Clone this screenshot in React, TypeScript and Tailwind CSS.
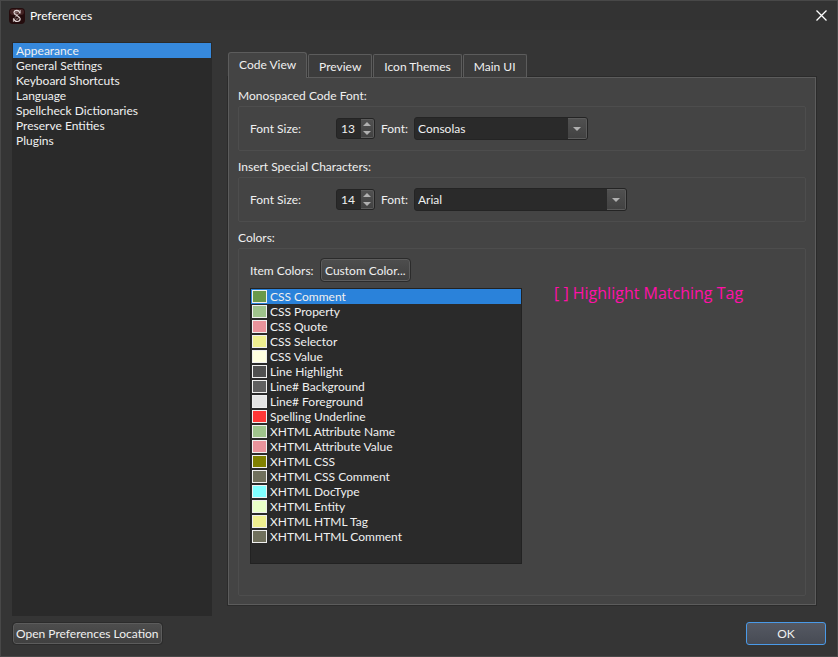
import { useState } from "react";

const sections = [
    "Appearance",
    "General Settings",
    "Keyboard Shortcuts",
    "Language",
    "Spellcheck Dictionaries",
    "Preserve Entities",
    "Plugins",
];

const tabs = ["Code View", "Preview", "Icon Themes", "Main UI"];

const itemColors = [
    { name: "CSS Comment", swatch: "bg-[#6a994a]" },
    { name: "CSS Property", swatch: "bg-[#9fc38c]" },
    { name: "CSS Quote", swatch: "bg-[#e9939b]" },
    { name: "CSS Selector", swatch: "bg-[#efef8f]" },
    { name: "CSS Value", swatch: "bg-[#ffffe0]" },
    { name: "Line Highlight", swatch: "bg-[#505050]" },
    { name: "Line# Background", swatch: "bg-[#606060]" },
    { name: "Line# Foreground", swatch: "bg-[#e4e4e4]" },
    { name: "Spelling Underline", swatch: "bg-[#ff3737]" },
    { name: "XHTML Attribute Name", swatch: "bg-[#9fc38c]" },
    { name: "XHTML Attribute Value", swatch: "bg-[#e9939b]" },
    { name: "XHTML CSS", swatch: "bg-[#808000]" },
    { name: "XHTML CSS Comment", swatch: "bg-[#70705c]" },
    { name: "XHTML DocType", swatch: "bg-[#80ffff]" },
    { name: "XHTML Entity", swatch: "bg-[#e8ffc8]" },
    { name: "XHTML HTML Tag", swatch: "bg-[#efef8f]" },
    { name: "XHTML HTML Comment", swatch: "bg-[#70705c]" },
];

function AppIcon() {
    return (
        <svg width="16" height="16" viewBox="0 0 16 16" fill="none" aria-hidden="true">
            <rect width="16" height="16" rx="4" fill="#240c0d" />
            <rect x="1" y="1" width="14" height="6" rx="3" fill="#432324" />
            <path d="M10.8 5.4C10.4 3.2 9.4 2.4 7.8 2.4 6 2.4 5 3.4 5 4.8c0 2.9 6.2 2.9 6.2 6 0 1.7-1.3 2.7-3.1 2.7-1.9 0-3-1-3.4-3.2" stroke="#e6dcdc" strokeWidth="1.1" />
            <path d="M11.2 2v3.4M4.4 10.4v3.4" stroke="#e6dcdc" strokeWidth=".8" />
            <path d="M8.6 4.1c-1.3-.4-2.2.3-1.9 1.3.5 1.5 2.9 2 2.8 4-.1 1.5-1.6 2.3-2.9 1.4M9.6 5.6L6.2 9.4" stroke="#cfc0c0" strokeWidth=".8" />
        </svg>
    );
}

function Spinner({ id, initial }: { id: string; initial: number }) {
    const [value, setValue] = useState(initial);
    return (
        <div className="flex h-[21px] w-[39px] rounded-[3px] border border-[#242424] bg-[#2a2a2a]">
            <input
                id={id}
                value={value}
                onChange={(e) => setValue(Number(e.target.value) || 0)}
                className="w-6 min-w-0 bg-transparent pl-1 text-[12px] leading-[19px] outline-none"
            />
            <div className="flex flex-1 flex-col rounded-r-[2px] border border-l-0 border-[#5c5c5c] bg-linear-to-b from-[#505050] to-[#424242]">
                <button aria-label="Increase" onClick={() => setValue(value + 1)} className="flex flex-1 items-center justify-center">
                    <svg width="8" height="4" viewBox="0 0 8 4"><path d="M4 0l4 4H0z" fill="#b0b0b0" /></svg>
                </button>
                <button aria-label="Decrease" onClick={() => setValue(value - 1)} className="flex flex-1 items-center justify-center">
                    <svg width="8" height="4" viewBox="0 0 8 4"><path d="M0 0h8L4 4z" fill="#b0b0b0" /></svg>
                </button>
            </div>
        </div>
    );
}

function FontGroup({ id, title, size, font, selectWidth }: any) {
    return (
        <section>
            <h2 className="h-[22px] leading-[24px]">{title}</h2>
            <div className="flex h-[45px] items-center rounded-[2px] border border-[#4d4d4d] pl-[11px]">
                <label htmlFor={`${id}-size`} className="w-[86px]">Font Size:</label>
                <Spinner id={`${id}-size`} initial={size} />
                <label htmlFor={`${id}-font`} className="ml-1.5 w-[33px] whitespace-nowrap">Font:</label>
                <div className={`relative h-[23px] ${selectWidth}`}>
                    <select
                        id={`${id}-font`}
                        defaultValue={font}
                        className="size-full appearance-none rounded-[3px] border border-[#242424] bg-[#2a2a2a] pl-[3px] text-[12px] outline-none"
                    >
                        <option>Arial</option>
                        <option>Consolas</option>
                    </select>
                    <span className="pointer-events-none absolute inset-y-px right-px flex w-[19px] items-center justify-center rounded-r-[2px] border border-l-0 border-[#5c5c5c] bg-linear-to-b from-[#505050] to-[#424242]">
                        <svg width="8" height="4" viewBox="0 0 8 4"><path d="M0 0h8L4 4z" fill="#b0b0b0" /></svg>
                    </span>
                </div>
            </div>
        </section>
    );
}

export default function App() {
    const [section, setSection] = useState("Appearance");
    const [tab, setTab] = useState("Code View");
    const [item, setItem] = useState("CSS Comment");

    return (
        <div className="flex min-h-screen flex-col border border-[#484848] bg-[#353535] font-['Lato','Noto_Sans',sans-serif] text-[12px] leading-[15px] text-[#f0f0f0]">
            <header className="flex h-[29px] items-center bg-[#333333] pr-2.5 pl-2">
                <AppIcon />
                <h1 className="ml-[5px] flex-1 text-white">Preferences</h1>
                <button aria-label="Close">
                    <svg width="11" height="11" viewBox="0 0 11 11" stroke="#fff" strokeWidth="1.3">
                        <path d="M.5.5l10 10M10.5.5l-10 10" />
                    </svg>
                </button>
            </header>

            <main className="flex flex-1 gap-4 px-[11px] pt-3">
                <nav className="w-[200px] shrink-0 border border-[#2a2a2a] bg-[#2a2a2a]">
                    {sections.map((name) => (
                        <button
                            key={name}
                            onClick={() => setSection(name)}
                            className={`block h-[15px] w-full pl-[3px] text-left ${section === name ? "bg-[#3689dd]" : ""}`}
                        >
                            {name}
                        </button>
                    ))}
                </nav>

                <div className="mr-[10px] mb-[11px] flex flex-1 flex-col pt-[10px]">
                    <div role="tablist" className="z-10 -mb-px flex items-end gap-px">
                        {tabs.map((name) => (
                            <button
                                key={name}
                                role="tab"
                                aria-selected={tab === name}
                                onClick={() => setTab(name)}
                                className={
                                    tab === name
                                        ? "h-[26px] rounded-t-[3px] border border-b-0 border-[#5c5c5c] bg-[#444444] px-2.5 pb-0.5"
                                        : "mb-px h-[23px] rounded-t-[2px] border border-b-0 border-[#5c5c5c] bg-[#3c3c3c] px-2.5"
                                }
                            >
                                {name}
                            </button>
                        ))}
                    </div>

                    <div role="tabpanel" className="flex flex-1 flex-col border border-[#5c5c5c] bg-[#444444] px-[9px] pt-1.5 pb-2 outline outline-[#2b2b2b]">
                        <FontGroup id="code" title="Monospaced Code Font:" size={13} font="Consolas" selectWidth="w-[174px]" />
                        <div className="mt-1">
                            <FontGroup id="special" title="Insert Special Characters:" size={14} font="Arial" selectWidth="w-[213px]" />
                        </div>

                        <section className="mt-1 flex flex-1 flex-col">
                            <h2 className="h-[22px] leading-[24px]">Colors:</h2>
                            <div className="flex flex-1 items-start gap-8 rounded-[2px] border border-[#4d4d4d] pt-[10px] pb-[30px] pl-[11px]">
                                <div className="w-[272px]">
                                    <div className="flex items-center">
                                        <span className="w-[71px]">Item Colors:</span>
                                        <button className="h-[22px] rounded-[3px] border border-[#5c5c5c] bg-linear-to-b from-[#4d4d4d] to-[#404040] px-[3px] whitespace-nowrap outline outline-[#2b2b2b]">
                                            Custom Color...
                                        </button>
                                    </div>
                                    <ul className="mt-[7px] h-[276px] border border-[#222222] bg-[#2a2a2a]">
                                        {itemColors.map(({ name, swatch }) => (
                                            <li key={name}>
                                                <button
                                                    onClick={() => setItem(name)}
                                                    className={`flex h-[15px] w-full items-center gap-[3px] pl-px text-left ${item === name ? "bg-[#2a82da]" : ""}`}
                                                >
                                                    <span className={`h-[13px] w-[15px] border border-[#f0f0f0] ${swatch}`} />
                                                    {name}
                                                </button>
                                            </li>
                                        ))}
                                    </ul>
                                </div>
                                <p className="mt-6 font-['Open_Sans','Noto_Sans',sans-serif] text-[16px] leading-[20px] text-[#ff10a8]">
                                    [ ] Highlight Matching Tag
                                </p>
                            </div>
                        </section>
                    </div>
                </div>
            </main>

            <footer className="flex justify-between px-[11px] pt-1.5 pb-[11px]">
                <button className="mt-px ml-px h-[21px] rounded-[3px] border border-[#5c5c5c] bg-linear-to-b from-[#4d4d4d] to-[#404040] px-0.5 outline outline-[#2b2b2b]">
                    Open Preferences Location
                </button>
                <button className="h-[23px] w-20 rounded-[3px] border border-[#4a9ae8] bg-linear-to-b from-[#555963] to-[#474b54]">OK</button>
            </footer>
        </div>
    );
}
